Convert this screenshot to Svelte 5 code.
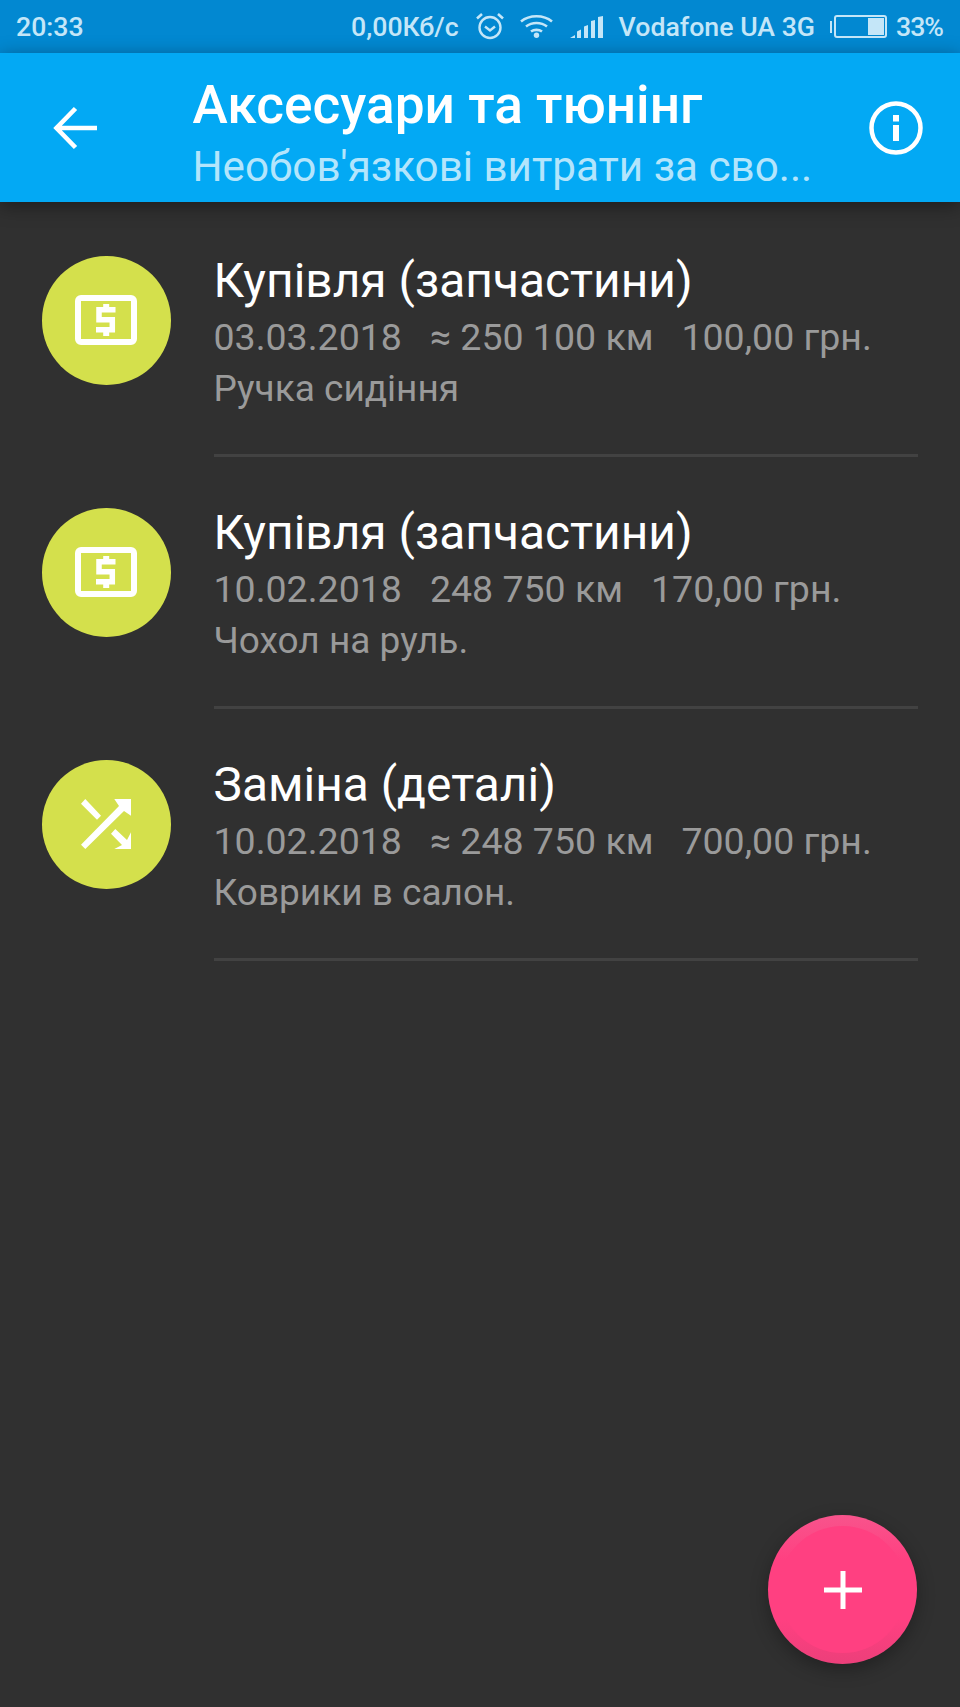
<script>
  const items = [
    { icon: 'cash', title: 'Купівля (запчастини)', date: '03.03.2018', km: '≈ 250 100 км', price: '100,00 грн.', note: 'Ручка сидіння' },
    { icon: 'cash', title: 'Купівля (запчастини)', date: '10.02.2018', km: '248 750 км', price: '170,00 грн.', note: 'Чохол на руль.' },
    { icon: 'swap', title: 'Заміна (деталі)', date: '10.02.2018', km: '≈ 248 750 км', price: '700,00 грн.', note: 'Коврики в салон.' }
  ];
</script>

<div class="screen">
  <div class="status">
    <span class="time">20:33</span>
    <div class="status-right">
      <span class="speed">0,00Кб/с</span>
      <svg class="alarm" width="28" height="28" viewBox="0 0 28 28" fill="none" stroke="#c4e6f8" stroke-width="2.400">
        <circle cx="14" cy="15.500" r="10.500" />
        <path d="M9 14.500l5 4 5-4" />
        <path d="M1 6.500l5-4.500M27 6.500l-5-4.500" stroke-width="2.600" />
      </svg>
      <svg class="wifi" width="33" height="24" viewBox="0 0 33 24" fill="none" stroke="#c4e6f8" stroke-width="2.600">
        <path d="M1 7.500C9.500 0.500 23.500 0.500 32 7.500" />
        <path d="M6 12.500C12 7.800 21 7.800 27 12.500" />
        <path d="M11 17.500C14 15.300 19 15.300 22 17.500" />
        <circle cx="16.500" cy="21.300" r="2.700" fill="#c4e6f8" stroke="none" />
      </svg>
      <svg class="signal" width="33" height="22" viewBox="0 0 33 22" fill="#c4e6f8">
        <path d="M0 22l5-3v3zM7 22v-6.500l4-2V22zM14 22V10.500l4-1.500V22zM21 22V5l4-1V22zM28 22V1l5-1v22z" />
      </svg>
      <span class="carrier">Vodafone UA 3G</span>
      <div class="battery">
        <span class="nub"></span>
        <div class="cell"><span class="level"></span></div>
      </div>
      <span class="pct">33%</span>
    </div>
  </div>

  <header class="bar">
    <button class="icon-btn back" aria-label="Назад">
      <svg width="44" height="44" viewBox="0 0 44 44" fill="none" stroke="#fff" stroke-width="4.600">
        <path d="M44 22H4M22.500 2.500L3.500 22l19 19.500" />
      </svg>
    </button>
    <div class="heading">
      <h1>Аксесуари та тюнінг</h1>
      <p>Необов'язкові витрати за сво...</p>
    </div>
    <button class="icon-btn info" aria-label="Інформація">
      <svg width="54" height="54" viewBox="0 0 54 54" fill="none">
        <circle cx="27" cy="27" r="24.500" stroke="#fff" stroke-width="4.500" />
        <rect x="24" y="24" width="6" height="16" fill="#fff" />
        <rect x="24" y="14" width="6" height="6.500" fill="#fff" />
      </svg>
    </button>
  </header>

  <main class="list">
    {#each items as item}
      <article class="row">
        <div class="avatar">
          {#if item.icon === 'cash'}
            <svg width="62" height="50" viewBox="0 0 62 50" fill="none" stroke="#fff">
              <rect x="3" y="3" width="56" height="44" rx="3" stroke-width="6" />
              <path d="M40.500 14.700H24V24.700H37.300V34.700H21" stroke-width="5.500" />
              <path d="M31.200 9v4M31.200 36v5" stroke-width="6" />
            </svg>
          {:else}
            <svg width="50" height="50" viewBox="0 0 50 50" fill="#fff">
              <path d="M0 4.700L4.300 0 20 16.700 16 20.700z" />
              <path d="M33.300 0H50V16.700L43 12 4.300 50 0 45.700 38 7z" />
              <path d="M30 34.700L34.300 30 46 41 50 33.300V50H33.300L41 46z" />
            </svg>
          {/if}
        </div>
        <div class="body">
          <div class="title">{item.title}</div>
          <div class="meta"><span>{item.date}</span><span>{item.km}</span><span>{item.price}</span></div>
          <div class="note">{item.note}</div>
        </div>
      </article>
    {/each}
  </main>

  <button class="fab" aria-label="Додати">
    <span class="fab-inner">
      <svg width="38" height="38" viewBox="0 0 38 38" fill="#fff">
        <rect x="16.500" y="0" width="5" height="38" />
        <rect x="0" y="16.500" width="38" height="5" />
      </svg>
    </span>
  </button>
</div>

<style>
  :global(body) {
    margin: 0;
    background: #303030;
  }
  .screen {
    position: relative;
    width: 960px;
    height: 1707px;
    overflow: hidden;
    background: #303030;
    font-family: Roboto, "Liberation Sans", sans-serif;
  }
  .status {
    height: 53px;
    background: #0288d1;
    display: flex;
    align-items: center;
    justify-content: space-between;
    padding: 0 17px 0 16px;
    color: #c4e6f8;
    font-size: 26.700px;
    font-weight: 500;
  }
  .status-right {
    display: flex;
    align-items: center;
  }
  .alarm { margin-left: 17px; margin-top: -1px; }
  .wifi { margin-left: 16px; margin-top: -1px; }
  .signal { margin-left: 17px; margin-top: 1px; }
  .carrier { margin-left: 16px; }
  .battery {
    display: flex;
    align-items: center;
    margin-left: 15px;
  }
  .nub {
    width: 2px;
    height: 12px;
    background: #c4e6f8;
    margin-right: 2px;
  }
  .cell {
    width: 53px;
    height: 23px;
    box-sizing: border-box;
    border: 2px solid #c4e6f8;
    border-radius: 3px;
    display: flex;
    justify-content: flex-end;
    padding: 1px;
  }
  .level {
    width: 16px;
    background: #c4e6f8;
  }
  .pct {
    margin-left: 9px;
    letter-spacing: -1px;
  }
  .bar {
    height: 149px;
    background: #03a9f4;
    display: flex;
    align-items: center;
    position: relative;
    z-index: 1;
    box-shadow: 0 4px 18px rgba(0, 0, 0, 0.4);
  }
  .icon-btn {
    background: none;
    border: 0;
    padding: 0;
    display: flex;
    color: inherit;
  }
  .back { margin-left: 53px; }
  .heading {
    margin-left: 95.500px;
    padding-top: 20px;
    flex: 1;
    min-width: 0;
  }
  h1 {
    margin: 0;
    color: #fff;
    font-size: 53.200px;
    font-weight: 500;
    line-height: 58px;
  }
  p {
    margin: 0;
    color: #b3e5fc;
    font-size: 42.200px;
    line-height: 66px;
    white-space: nowrap;
  }
  .info { margin-right: 37px; }
  .list {
    display: flex;
    flex-direction: column;
    padding-top: 3px;
  }
  .row {
    height: 252px;
    display: flex;
    box-sizing: border-box;
    padding-left: 42px;
  }
  .avatar {
    width: 128.500px;
    height: 128.500px;
    border-radius: 50%;
    background: #d4e04c;
    margin-top: 51px;
    display: flex;
    align-items: center;
    justify-content: center;
    flex: none;
  }
  .body {
    margin-left: 43px;
    width: 704px;
    height: 252px;
    box-sizing: border-box;
    padding-top: 48px;
    border-bottom: 3px solid #424242;
  }
  .title {
    color: #fff;
    font-size: 47.900px;
    line-height: 56px;
  }
  .meta,
  .note {
    color: #9a9a9a;
    line-height: 52px;
  }
  .meta {
    display: flex;
    gap: 28px;
    margin-top: 2px;
    font-size: 37.500px;
  }
  .note { font-size: 37px; }
  .fab {
    position: absolute;
    left: 768px;
    top: 1515px;
    width: 149px;
    height: 149px;
    border: 0;
    padding: 0;
    border-radius: 50%;
    background: linear-gradient(#f8548c, #ff4081 30%, #ff4081 70%, #ec3f7a);
    box-shadow: 0 6px 18px rgba(0, 0, 0, 0.3);
    display: flex;
    align-items: center;
    justify-content: center;
  }
  .fab-inner {
    width: 127px;
    height: 127px;
    border-radius: 50%;
    background: #ff4081;
    display: flex;
    align-items: center;
    justify-content: center;
  }
</style>
